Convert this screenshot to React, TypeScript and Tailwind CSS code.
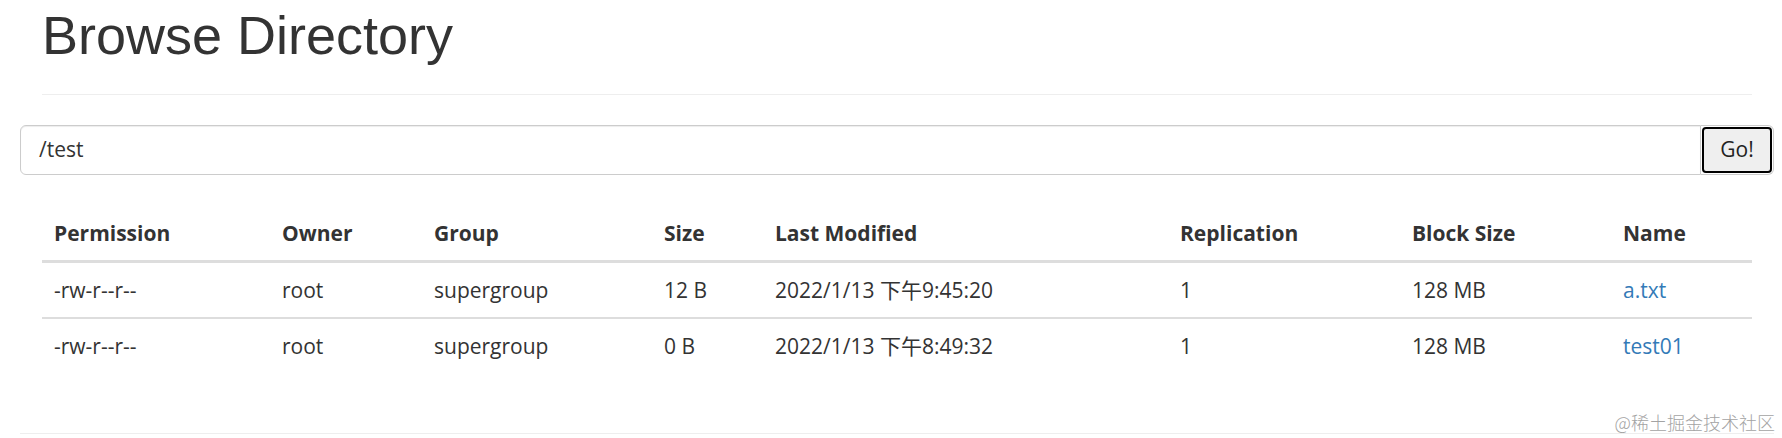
import React from 'react';

type Row = {
  perm: string;
  owner: string;
  group: string;
  size: string;
  modified: string;
  replication: string;
  blockSize: string;
  name: string;
};

const rows: Row[] = [
  { perm: '-rw-r--r--', owner: 'root', group: 'supergroup', size: '12 B', modified: '2022/1/13 下午9:45:20', replication: '1', blockSize: '128 MB', name: 'a.txt' },
  { perm: '-rw-r--r--', owner: 'root', group: 'supergroup', size: '0 B', modified: '2022/1/13 下午8:49:32', replication: '1', blockSize: '128 MB', name: 'test01' },
];

const bodyFont = "font-['Open_Sans','Noto_Sans_CJK_SC',sans-serif]";

export default function App() {
  return (
    <div className="relative w-[1782px] h-[438px] overflow-hidden bg-white text-[#333]">
      <div className="ml-[20px] w-[1754px]">
        {/* page header */}
        <div className="px-[22px]">
          <h1 className="pt-[6px] text-[54px] leading-[59px] font-['Liberation_Sans',Arial,sans-serif] font-normal">
            Browse Directory
          </h1>
          <div className="mt-[29px] border-t border-[#eeeeee]" />
        </div>

        {/* path input */}
        <div className={`mt-[30px] flex h-[50px] ${bodyFont}`}>
          <div className="flex flex-1 items-center rounded-l-[6px] border border-[#cccccc] pl-[18px] text-[21px] shadow-[inset_0_1px_1px_rgba(0,0,0,0.075)]">
            /test
          </div>
          <button className="w-[73px] rounded-r-[6px] border border-l-0 border-[#cccccc] bg-white p-[1px]">
            <span className="flex h-full w-full items-center justify-center rounded-[4px] border-2 border-black bg-[#efefef] text-[21px] text-[#222]">
              Go!
            </span>
          </button>
        </div>

        {/* listing */}
        <div className="px-[22px]">
          <table className={`mt-[31px] w-full table-fixed border-collapse text-left text-[21px] ${bodyFont}`}>
            <thead>
              <tr className="font-bold">
                <th className="w-[228px] border-b-[3px] border-[#dddddd] px-[12px] py-[12px] leading-[30px]">Permission</th>
                <th className="w-[152px] border-b-[3px] border-[#dddddd] px-[12px] py-[12px] leading-[30px]">Owner</th>
                <th className="w-[230px] border-b-[3px] border-[#dddddd] px-[12px] py-[12px] leading-[30px]">Group</th>
                <th className="w-[111px] border-b-[3px] border-[#dddddd] px-[12px] py-[12px] leading-[30px]">Size</th>
                <th className="w-[405px] border-b-[3px] border-[#dddddd] px-[12px] py-[12px] leading-[30px]">Last Modified</th>
                <th className="w-[232px] border-b-[3px] border-[#dddddd] px-[12px] py-[12px] leading-[30px]">Replication</th>
                <th className="w-[211px] border-b-[3px] border-[#dddddd] px-[12px] py-[12px] leading-[30px]">Block Size</th>
                <th className="border-b-[3px] border-[#dddddd] px-[12px] py-[12px] leading-[30px]">Name</th>
              </tr>
            </thead>
            <tbody>
              {rows.map((r, i) => (
                <tr key={r.name} className={i > 0 ? 'border-t-2 border-[#dddddd]' : ''}>
                  <td className="px-[12px] py-[12px] leading-[30px]">{r.perm}</td>
                  <td className="px-[12px] py-[12px] leading-[30px]">{r.owner}</td>
                  <td className="px-[12px] py-[12px] leading-[30px]">{r.group}</td>
                  <td className="px-[12px] py-[12px] leading-[30px]">{r.size}</td>
                  <td className="px-[12px] py-[12px] leading-[30px]">{r.modified}</td>
                  <td className="px-[12px] py-[12px] leading-[30px]">{r.replication}</td>
                  <td className="px-[12px] py-[12px] leading-[30px]">{r.blockSize}</td>
                  <td className="px-[12px] py-[12px] leading-[30px]">
                    <a href="#" className="text-[#337ab7]">{r.name}</a>
                  </td>
                </tr>
              ))}
            </tbody>
          </table>
        </div>

        <div className="mt-[60px] border-t border-[#eeeeee]" />
      </div>

      {/* watermark */}
      <div className="absolute bottom-[5px] right-[7px] text-[18px] leading-[22px] text-[#a3a3a3] font-['Noto_Sans_CJK_SC',sans-serif] font-light">
        @稀土掘金技术社区
      </div>
    </div>
  );
}
